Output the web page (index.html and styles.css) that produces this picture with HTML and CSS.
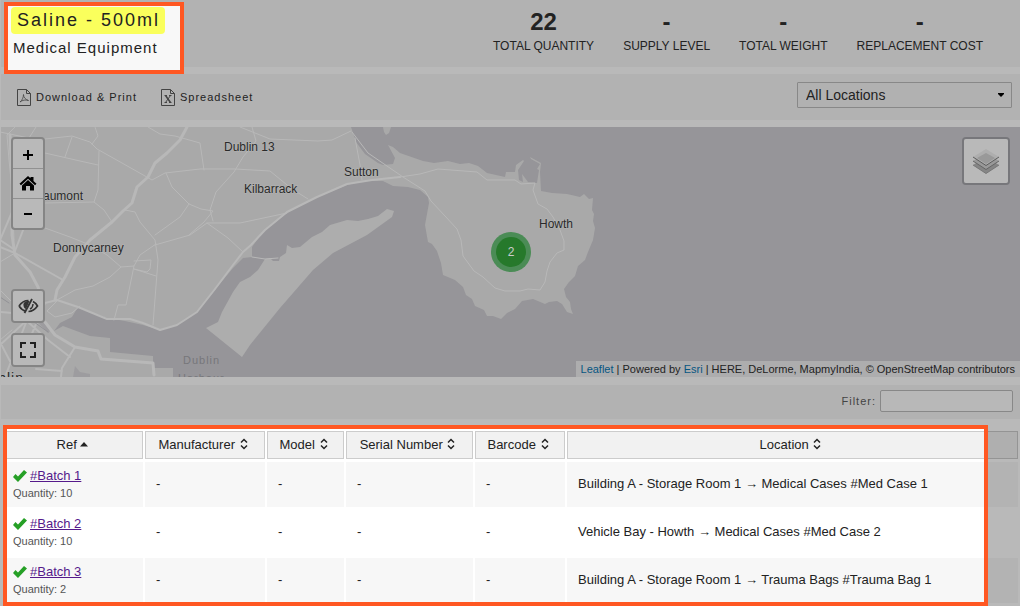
FILE: index.html
```html
<!DOCTYPE html>
<html lang="en">
<head>
<meta charset="utf-8">
<title>Saline - 500ml</title>
<meta name="viewport" content="width=device-width, initial-scale=1">
<link rel="stylesheet" href="styles.css">
</head>
<body>
<svg class="defs" width="0" height="0" aria-hidden="true">
  <symbol id="sort" viewBox="0 0 10 12"><path d="M2 4.500 5 1.500 8 4.500M2 7.500 5 10.500 8 7.500" fill="none" stroke="#222" stroke-width="1.500"/></symbol>
  <symbol id="check" viewBox="0 0 14 12"><path d="M0 7 2.500 4 5 6.500 11 0 14 2.500 5 12Z" fill="#26a026"/></symbol>
</svg>
<header class="summary">
  <div class="title-box">
    <h1 class="title">Saline - 500ml</h1>
    <p class="category">Medical Equipment</p>
  </div>
  <dl class="stats">
    <div class="stat"><dt>TOTAL QUANTITY</dt><dd>22</dd></div>
    <div class="stat"><dt>SUPPLY LEVEL</dt><dd>-</dd></div>
    <div class="stat"><dt>TOTAL WEIGHT</dt><dd>-</dd></div>
    <div class="stat"><dt>REPLACEMENT COST</dt><dd>-</dd></div>
  </dl>
</header>
<div class="toolbar">
  <button class="tool" type="button">
    <svg width="14" height="17" viewBox="0 0 14 17" fill="none" stroke="#444"><path d="M.5.5H9.500L13.500 4.500V16.500H.5ZM9.500.5V4.500H13.500"/><path d="M3 13C5 11.500 6.500 8.500 6.500 5.500C6.500 8.500 8.500 10.500 11.500 11.500C8.500 10.500 5.500 11 3 13Z" stroke-width=".8"/></svg>
    Download &amp; Print
  </button>
  <button class="tool" type="button">
    <svg width="14" height="17" viewBox="0 0 14 17" fill="none" stroke="#444"><path d="M.5.5H9.500L13.500 4.500V16.500H.5ZM9.500.5V4.500H13.500"/><path d="M4.500 6.500 9.500 13.500" stroke-width="1.500"/><path d="M9.500 6.500 4.500 13.500M3.500 6.500H6M8 6.500H10.500M3.500 13.500H6M8 13.500H10.500"/></svg>
    Spreadsheet
  </button>
  <div class="picker">
    <select aria-label="Location"><option>All Locations</option></select>
    <svg class="caret" width="6" height="4" viewBox="0 0 6 4"><path d="M0 0H6V1L3 4 0 1Z" fill="#000"/></svg>
  </div>
</div>
<section class="map" aria-label="Map">
  <svg class="tiles" viewBox="1 127 1019 250" preserveAspectRatio="xMinYMin slice">
    <rect x="0" y="127" width="1400" height="400" fill="#969599"/>
    <path fill="#a9a9a9" d="M0 127H351L356 142 365 154 378 163 383 165 393 164 395 158 388 145 393 147 400 153 423 161 434 163 448 161 460 164 469 163 478 166 487 173 505 177 506 172 515 172 516 165 523 160 524 161 518 170 519 180 523 182 522 174 528 182 537 183 539 170 537 169 540 164 531 159 530 157 541 163 540 172 541 191 552 193 567 194 580 197 584 194 589 199 593 198 592 210 594 214 593 221 595 228 593 240 588 252 585 260 578 266 575 276 569 282 564 289 566 297 570 302 571 309 573 314 567 312 562 304 557 301 549 302 545 304 533 299 522 301 515 309 507 313 501 319 493 316 487 316 484 310 475 306 472 299 466 295 463 287 455 280 443 275 441 263 437 251 432 244 428 242 425 225 429 203 428 197 420 190 408 187 393 186 383 181 363 181 347 185 317 197 287 213 263 232 252 247 252 257 243 258 233 268 213 292 197 312 177 325 160 330 143 325 125 321 107 318 78 307 72 317 60 323 54 331 63 326 90 336 110 338V352L153 356V368H173V377H0Z"/>
    <path fill="#a9a9a9" d="M383 127H391L389 133 386 135 384 132Z"/>
    <path fill="#adadad" d="M265 259 270 258 273 261 279 261 280 257 286 253 287 245 292 248 300 247 312 237 322 232 330 225 347 220 358 221 368 219 378 216 387 209 394 211 392 217 367 235 333 253 313 270 280 308 250 345 242 357 206 328 218 322 222 312 233 292 240 282 250 277 258 270Z"/>
    <path fill="#969599" d="M75 366 80 372 90 374V377H73Z M36 315 51 330 48 333 34 318Z" opacity=".6"/>
    <g fill="none" stroke="#b8b8b8" stroke-linejoin="round" stroke-linecap="round">
      <path stroke-width="3" d="M187 127 180 140 167 153 155 163 148 177 137 187 132 203 123 211 112 222 90 240 75 257 65 277 57 290 55 300M10 135 12 180V235L15 255 30 272 38 287 42 302M45 322 55 335 75 347 98 351 101 359 153 363 154 375"/>
      <path stroke-width="2" d="M0 247 15 253 63 280M15 251 25 225 36 210M15 250 0 240 12 212M45 303 57 300 78 307 107 319 130 319 143 323 160 330 177 325 197 312 215 289 233 265 243 252 251 245 265 230 287 212 317 197 347 184 372 180 400 177M28 322 48 340 70 357M75 347 62 368 61 377M0 312 35 315 45 303 25 350 12 365 0 342M36 369 62 371M5 377 27 320 0 345"/>
      <path stroke-width="1" d="M15 127 7 135 9 160 12 190 14 240M72 137 65 157M45 139 72 136 90 142 97 149 122 163 145 176 152 180 165 173 200 169 235 169 270 171 292 189 308 199M45 153 80 161 98 165M99 151 98 190 94 202 104 210 112 222M45 203 94 202M36 127 29 138 0 132M95 127 98 136 92 144M148 127 160 134 175 136 200 143 204 170M252 127 256 141 243 157 234 172 216 192 210 210 213 221M240 127 270 139 318 141 332 140 351 131M166 173 172 187 189 204 201 209 213 211 204 222 189 235M189 204 180 217 155 235M125 210 135 212 140 222 155 240 158 260 153 325M155 245 190 235 207 223 240 223 287 213M207 223 228 238 243 252M45 228 70 237 90 245 107 255 121 267 134 266 140 255 156 244M134 261 151 260 150 269 147 272 134 269 156 276M134 266 126 305 118 305 114 320M57 300 75 290 93 286 110 277 121 267M57 301 47 311 55 317 72 313 80 306M0 262 15 253M352 132 368 153 403 177 425 191 431 201 445 216 457 229 461 240 463 256 474 271 483 277 495 288 505 291 520 291 528 289 540 290 545 282 547 271 550 262 557 253 564 250 564 241 560 230 553 217 547 209 538 204 533 190 535 183 521 184 515 180 487 180 477 172 438 169 420 174 400 177M355 138 360 165 362 180M0 290 10 300 30 315 36 322M12 330 0 340M252 257 265 259 278 258"/>
      <path stroke="#929296" stroke-width="1" d="M0 297 9 303M27 317 48 332"/>
    </g>
    <g class="place">
      <text x="224" y="151">Dublin 13</text>
      <text x="344" y="176">Sutton</text>
      <text x="244" y="193">Kilbarrack</text>
      <text x="83" y="200" text-anchor="end">Beaumont</text>
      <text x="53" y="252">Donnycarney</text>
      <text x="539" y="228">Howth</text>
      <text class="city" x="24" y="383" text-anchor="end">Dublin</text>
      <text class="water" x="183" y="364">Dublin</text>
      <text class="water" x="178" y="382">Harbour</text>
    </g>
    <circle cx="511" cy="252" r="20" fill="#4b8c56"/>
    <circle cx="511" cy="252" r="15" fill="#26792b"/>
    <text class="cluster" x="511" y="256" text-anchor="middle">2</text>
  </svg>
  <div class="controls controls-top">
    <div class="control zoom">
      <button type="button" aria-label="Zoom in"><svg width="30" height="29"><path d="M10 16H20M15 11V21" stroke="#000" stroke-width="2"/></svg></button>
      <button type="button" aria-label="Home"><svg width="30" height="29"><path d="M15 7 17.500 9.300V8H20.500V12L23.500 14.800 22 16.300 15 9.800 8 16.300 6.500 14.800Z M9 16.500 15 11 21 16.500V21.500H17V17H13V21.500H9Z" fill="#000"/></svg></button>
      <button type="button" aria-label="Zoom out"><svg width="30" height="29"><path d="M11 15H19" stroke="#000" stroke-width="2"/></svg></button>
    </div>
  </div>
  <div class="controls controls-bottom">
    <div class="control">
      <button type="button" aria-label="Hide markers"><svg width="30" height="30" fill="none" stroke="#333"><path d="M6 15C9 10.500 12 9.500 15.500 9.500M6 15C8 18 10 19.500 12.500 20M20 10.500C22 11.500 23.500 13 24.500 15C22 18.500 19.500 20.300 15.500 20.500" stroke-width="1.700"/><path d="M19 8 11.500 22" stroke-width="1.800"/><path d="M16.500 10C12 9.500 10 12 10.500 14.500C10.700 16.500 11.500 17.500 13 18Z" fill="#333" stroke="none"/><path d="M20 13C20 15.500 19 17 17 18" stroke-width="1.400"/></svg></button>
    </div>
    <div class="control">
      <button type="button" aria-label="Full screen"><svg width="30" height="30" fill="none" stroke="#222" stroke-width="2"><path d="M8 13V8H13M17 8H22V13M22 17V22H17M13 22H8V17"/></svg></button>
    </div>
  </div>
  <div class="controls controls-right">
    <div class="control layers">
      <button type="button" aria-label="Layers"><svg width="26" height="26" viewBox="0 0 26 26"><path d="M0 17 13 9 26 17 13 25.500Z" fill="#858585"/><path d="M0 17 13 25.500 26 17" fill="none" stroke="#777"/><path d="M0 13 13 5 26 13 13 21.500Z" fill="#999"/><path d="M0 13 13 21.500 26 13" fill="none" stroke="#666"/><path d="M0 9 13 1 26 9 13 17.500Z" fill="#aeaeae"/><path d="M4 10 13 5 22 10 13 16Z" fill="#999"/><path d="M0 9 13 17.500 26 9" fill="none" stroke="#5c5c5c"/></svg></button>
    </div>
  </div>
  <p class="attribution"><a href="#leaflet">Leaflet</a> | Powered by <a href="#esri">Esri</a> | HERE, DeLorme, MapmyIndia, © OpenStreetMap contributors</p>
</section>
<div class="filter-bar">
  <label for="filter">Filter:</label>
  <input id="filter" type="text">
</div>
<main class="listing">
  <table class="batches">
    <colgroup><col class="col-ref"><col class="col-maker"><col class="col-model"><col class="col-serial"><col class="col-barcode"><col></colgroup>
    <thead>
      <tr>
        <th>Ref <svg class="up" width="8" height="5" viewBox="0 0 8 5"><path d="M0 4.500 4 0 8 4.500Z" fill="#222"/></svg></th>
        <th>Manufacturer <svg width="10" height="12"><use href="#sort"/></svg></th>
        <th>Model <svg width="10" height="12"><use href="#sort"/></svg></th>
        <th>Serial Number <svg width="10" height="12"><use href="#sort"/></svg></th>
        <th>Barcode <svg width="10" height="12"><use href="#sort"/></svg></th>
        <th>Location <svg width="10" height="12"><use href="#sort"/></svg></th>
      </tr>
    </thead>
    <tbody>
      <tr>
        <td><div class="ref"><svg width="14" height="12"><use href="#check"/></svg><a href="#batch-1">#Batch 1</a></div><div class="qty">Quantity: 10</div></td>
        <td>-</td><td>-</td><td>-</td><td>-</td>
        <td>Building A - Storage Room 1 → Medical Cases #Med Case 1</td>
      </tr>
      <tr>
        <td><div class="ref"><svg width="14" height="12"><use href="#check"/></svg><a href="#batch-2">#Batch 2</a></div><div class="qty">Quantity: 10</div></td>
        <td>-</td><td>-</td><td>-</td><td>-</td>
        <td>Vehicle Bay - Howth → Medical Cases #Med Case 2</td>
      </tr>
      <tr>
        <td><div class="ref"><svg width="14" height="12"><use href="#check"/></svg><a href="#batch-3">#Batch 3</a></div><div class="qty">Quantity: 2</div></td>
        <td>-</td><td>-</td><td>-</td><td>-</td>
        <td>Building A - Storage Room 1 → Trauma Bags #Trauma Bag 1</td>
      </tr>
    </tbody>
  </table>
  <div class="spotlight" aria-hidden="true"></div>
</main>
</body>
</html>
```
FILE: styles.css
```css
* { box-sizing: border-box; }

body {
  margin: 0;
  background: #b9b9b9;
  color: #222;
  font: 13px/16px "Liberation Sans", Arial, sans-serif;
}

h1, p, dl, dd { margin: 0; }
button, select, input { font: inherit; color: inherit; }
button { border: 0; padding: 0; background: none; }
.defs { position: absolute; }

/* Summary */
.summary {
  display: flex;
  justify-content: space-between;
  margin-left: 1px;
  padding-right: 37px;
  background: #b2b2b2;
}
.title-box {
  margin: 2px 0 -7px 3px;
  padding: 1px 15px 12px 3px;
  border: 4px solid #ff5722;
  background: #f8f8f8;
}
.title {
  padding: 0 5px 0 6px;
  border-radius: 4px;
  background: #faff5c;
  font-size: 18px;
  line-height: 27px;
  font-weight: 400;
  letter-spacing: 2px;
}
.category {
  padding: 4px 0 0 2px;
  font-size: 15px;
  line-height: 20px;
  letter-spacing: 1px;
  white-space: nowrap;
}
.stats {
  display: flex;
  gap: 29px;
  padding-top: 8px;
}
.stat {
  display: flex;
  flex-direction: column-reverse;
  justify-content: flex-end;
  text-align: center;
}
.stat dt { font-size: 12px; line-height: 20px; }
.stat dd { font-size: 24px; line-height: 28px; font-weight: 700; }

/* Toolbar */
.toolbar {
  display: flex;
  align-items: center;
  gap: 24px;
  margin: 7px 0 7px 1px;
  padding: 8px 8px 12px 16px;
  background: #b2b2b2;
}
.tool {
  display: flex;
  align-items: center;
  gap: 5px;
  padding-top: 4px;
  font-size: 11px;
  letter-spacing: 1px;
}
.picker { position: relative; margin-left: auto; }
.picker select {
  display: block;
  width: 215px;
  height: 26px;
  padding: 0 8px;
  appearance: none;
  border: 1px solid #888;
  border-radius: 1px;
  background: #b1b1b1;
  font-size: 14px;
}
.caret { position: absolute; top: 11px; right: 8px; pointer-events: none; }

/* Map */
.map { position: relative; margin-left: 1px; }
.tiles { display: block; width: 100%; height: 250px; }
.place text {
  fill: #2a2a2a;
  font-size: 12px;
  paint-order: stroke;
  stroke: #b4b4b4;
  stroke-width: 1px;
}
.place .city { font-size: 14px; letter-spacing: 1px; }
.place .water { fill: #77777b; stroke: none; font-size: 11px; letter-spacing: 1px; }
.cluster { fill: #ccc; font-size: 12px; }
.controls { position: absolute; display: grid; gap: 10px; }
.controls-top { top: 10px; left: 10px; }
.controls-bottom { bottom: 10px; left: 10px; }
.controls-right { top: 10px; right: 10px; }
.control {
  display: grid;
  gap: 1px;
  border: 2px solid #858585;
  border-radius: 4px;
  background: #919191;
  overflow: hidden;
}
.control button { background: #b9b9b9; }
.control svg { display: block; }
.layers { border-color: #77777b; }
.layers button { padding: 9px; }
.attribution {
  position: absolute;
  right: 0;
  bottom: 0;
  padding: 0 5px;
  background: #adadae;
  font-size: 11px;
}
.attribution a { color: #075682; text-decoration: none; }

/* Filter */
.filter-bar {
  display: flex;
  align-items: center;
  justify-content: flex-end;
  gap: 4px;
  margin: 8px 0 0 1px;
  padding: 5px 7px 7px;
  background: #b2b2b2;
  color: #444;
  font-size: 11px;
  letter-spacing: 1px;
}
.filter-bar input {
  width: 133px;
  height: 22px;
  border: 1px solid #888;
  border-radius: 2px;
  background: #b8b8b8;
}

/* Batches */
.listing {
  position: relative;
  padding: 9px 0 1px 3px;
  overflow: hidden;
  background: #fff;
}
.batches {
  width: 100%;
  table-layout: fixed;
  border-spacing: 2px 3px;
}
.col-ref { width: 138px; }
.col-maker { width: 120px; }
.col-model { width: 77px; }
.col-serial { width: 127px; }
.col-barcode { width: 90px; }
.batches th {
  height: 28px;
  padding: 0 3px 0 0;
  border: 1px solid #ccc;
  background: #f1f1f1;
  font-weight: 400;
}
.batches th svg { vertical-align: -1px; }
.batches th .up { vertical-align: 2px; }
.batches td { height: 45px; padding: 0 11px 2px; }
.batches td:first-child { padding: 0 8px 1px; }
.batches tbody tr:nth-child(odd) td { background: #f7f7f7; }
.ref { display: flex; align-items: center; gap: 3px; }
.ref a { color: #551a8b; }
.qty { padding-top: 1px; color: #555; font-size: 11px; }
.spotlight {
  position: absolute;
  inset: 6px 32px 1px 3px;
  border: 4px solid #ff5722;
  box-shadow: 0 0 0 60px rgba(0, 0, 0, 0.275);
  pointer-events: none;
}
```
